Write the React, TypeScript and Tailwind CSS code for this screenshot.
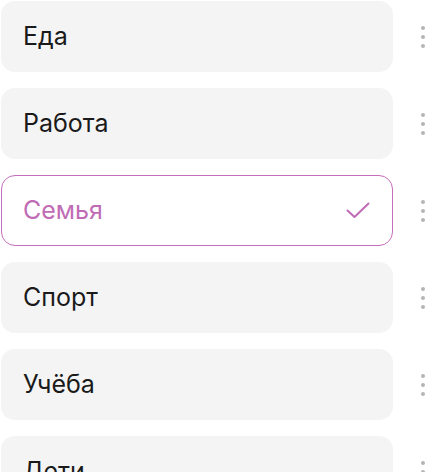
const items = ["Еда", "Работа", "Семья", "Спорт", "Учёба", "Дети"];
const selected = "Семья";

function Dots() {
	return (
		<div className="ml-[28px] flex flex-col gap-[5px]">
			<span className="w-[4px] h-[4px] rounded-full bg-[#b5b5b5]" />
			<span className="w-[4px] h-[4px] rounded-full bg-[#b5b5b5]" />
			<span className="w-[4px] h-[4px] rounded-full bg-[#b5b5b5]" />
		</div>
	);
}

function Row({ label, active }: { label: string; active: boolean }) {
	return (
		<div className="flex items-center">
			<div
				className={
					active
						? "w-[392px] h-[71px] rounded-[14px] border border-[#c46fba] bg-white flex items-center justify-between pl-[21px] pr-[22px]"
						: "w-[392px] h-[71px] rounded-[14px] bg-[#f4f4f4] flex items-center justify-between pl-[22px] pr-[23px]"
				}
			>
				<span
					className={
						active
							? "text-[25px] leading-none text-[#c06cb5]"
							: "text-[25px] leading-none text-[#1a1a1a]"
					}
				>
					{label}
				</span>
				{active && (
					<svg width="24" height="17" viewBox="0 0 24 17" fill="none">
						<path
							d="M1.5 8.5 L8.5 15 L22.5 1.5"
							stroke="#c06cb5"
							strokeWidth="2"
							strokeLinecap="round"
							strokeLinejoin="round"
						/>
					</svg>
				)}
			</div>
			<Dots />
		</div>
	);
}

export default function App() {
	return (
		<div
			className="w-[439px] h-[472px] overflow-hidden bg-white pt-[1px] pl-[1px] flex flex-col gap-[16px]"
			style={{ fontFamily: "Inter, 'Noto Sans', sans-serif" }}
		>
			{items.map((it) => (
				<Row key={it} label={it} active={it === selected} />
			))}
		</div>
	);
}
